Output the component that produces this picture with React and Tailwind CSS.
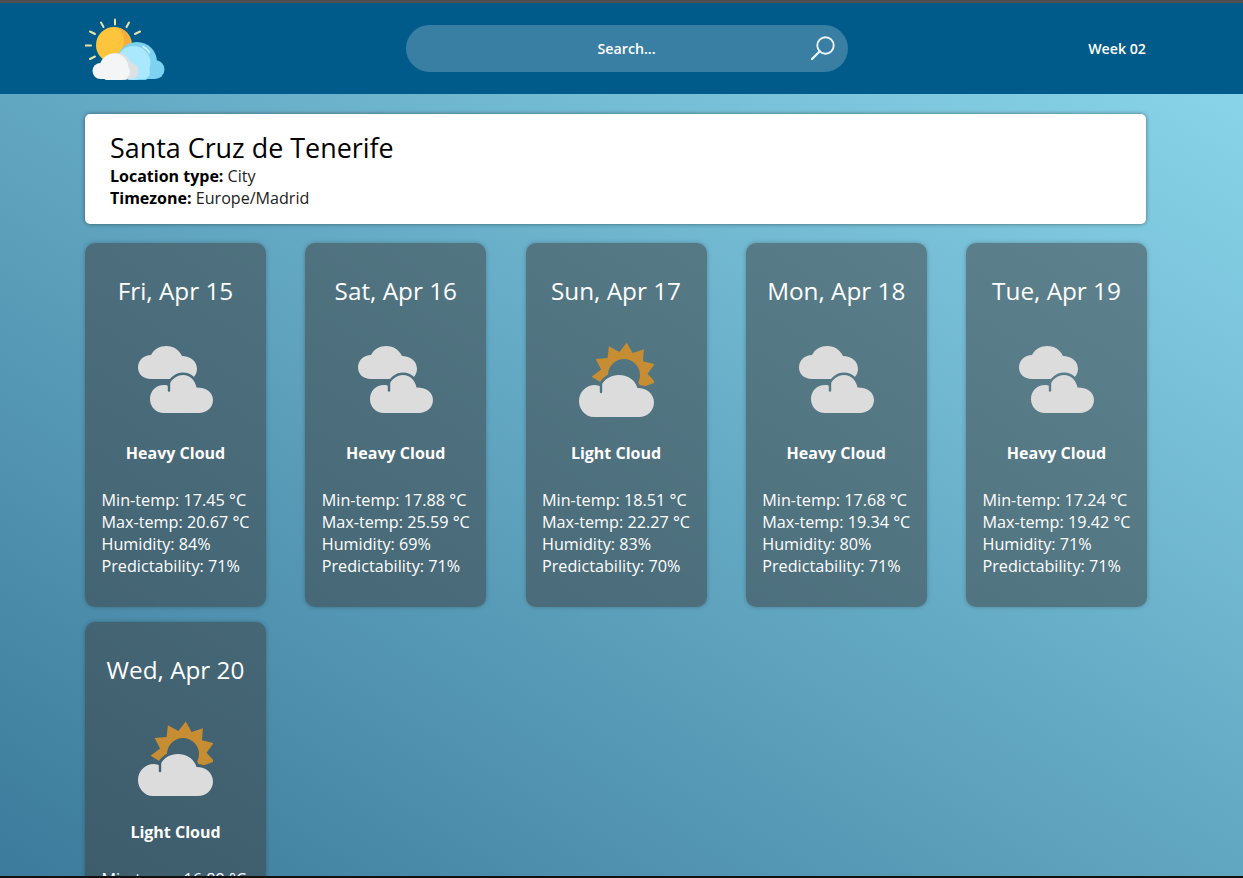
import React from "react";

const days = [
  { date: "Fri, Apr 15", kind: "Heavy Cloud", min: "17.45", max: "20.67", hum: 84, pred: 71 },
  { date: "Sat, Apr 16", kind: "Heavy Cloud", min: "17.88", max: "25.59", hum: 69, pred: 71 },
  { date: "Sun, Apr 17", kind: "Light Cloud", min: "18.51", max: "22.27", hum: 83, pred: 70 },
  { date: "Mon, Apr 18", kind: "Heavy Cloud", min: "17.68", max: "19.34", hum: 80, pred: 71 },
  { date: "Tue, Apr 19", kind: "Heavy Cloud", min: "17.24", max: "19.42", hum: 71, pred: 71 },
  { date: "Wed, Apr 20", kind: "Light Cloud", min: "16.89", max: "21.02", hum: 78, pred: 70 },
];

const lowerCloud = "M26 71C18 71 12 65 12 57C12 49 18 43 26 43C28 43 29.5 43.5 31 44C33 37 39 33 45 33C52 33 57 38 58.5 45.5C68 45.5 75 50 75 58C75 66 68 71 61 71Z";
const upperCloud = "M13 37C5 37 0 32 0 25.5C0 18 6 13 13 13C16 7 22 4 28 4C36 4 41 8 44 14C52 14 59 19 59 27C59 31 57 34 54 37Z";
const bigCloud = "M15 75C6 75 0 67 0 59C0 50 7 43 16 43C18 43 20 43.5 22 44.5C25 37 32 33 40 33C49 33 56 38 58.5 46C68 46 75 52 75 60.5C75 69 68 75 60 75Z";

function HeavyCloud() {
  return (
    <svg width="75" height="75" viewBox="0 0 75 75" className="block">
      <mask id="hc-upper" maskUnits="userSpaceOnUse" x="0" y="0" width="75" height="75">
        <rect width="75" height="75" fill="#fff" />
        <path d={lowerCloud} fill="#000" stroke="#000" strokeWidth="5" />
      </mask>
      <mask id="hc-lower" maskUnits="userSpaceOnUse" x="0" y="0" width="75" height="75">
        <rect width="75" height="75" fill="#fff" />
        <path d="M31 41V48.5" stroke="#000" strokeWidth="2.4" strokeLinecap="round" />
      </mask>
      <path d={upperCloud} fill="#dcdcdc" mask="url(#hc-upper)" />
      <path d={lowerCloud} fill="#dcdcdc" mask="url(#hc-lower)" />
    </svg>
  );
}

function sunPath() {
  const cx = 45, cy = 33;
  const spikes = [];
  for (let i = 0; i < 22; i++) {
    const a = ((-85 + i * (360 / 22)) * Math.PI) / 180;
    const r = i % 2 === 0 ? 32.5 : 23.5;
    spikes.push(`${(cx + r * Math.cos(a)).toFixed(1)} ${(cy + r * Math.sin(a)).toFixed(1)}`);
  }
  return `M${spikes.join("L")}ZM${cx - 16} ${cy}a16 16 0 1 0 32 0a16 16 0 1 0-32 0Z`;
}

function LightCloud() {
  return (
    <svg width="75" height="75" viewBox="0 0 75 75" className="block">
      <mask id="lc-sun" maskUnits="userSpaceOnUse" x="0" y="0" width="75" height="75">
        <rect width="75" height="75" fill="#fff" />
        <path d={bigCloud} fill="#000" stroke="#000" strokeWidth="6" />
      </mask>
      <mask id="lc-cloud" maskUnits="userSpaceOnUse" x="0" y="0" width="75" height="75">
        <rect width="75" height="75" fill="#fff" />
        <path d="M22 42V50" stroke="#000" strokeWidth="2.4" strokeLinecap="round" />
      </mask>
      <path d={sunPath()} fill="#c78d33" fillRule="evenodd" mask="url(#lc-sun)" />
      <path d={bigCloud} fill="#dcdcdc" mask="url(#lc-cloud)" />
    </svg>
  );
}

function Logo() {
  const rays = [
    [30, 1.5, 30, 6.5], [16, 4.5, 18.5, 9], [44, 4.5, 41.5, 9], [5, 13.5, 10, 16],
    [55, 13.5, 50, 16], [0.5, 27.5, 6, 27.5], [5, 41, 10, 38.5],
  ];
  return (
    <svg width="80" height="62" viewBox="0 0 80 62" className="block" style={{ marginTop: 1 }}>
      {rays.map((r, i) => (
        <line key={i} x1={r[0]} y1={r[1]} x2={r[2]} y2={r[3]} stroke="#e8e3a6" strokeWidth="2" strokeLinecap="round" />
      ))}
      <circle cx="29" cy="27" r="18" fill="#fcc53c" />
      <path d="M33 9.500a18 18 0 0 1 13 17.500c0 4-1 7-3 10l-14 2c6-3 10-9 10-16 0-5-2-10-6-13.500Z" fill="#f8ad3a" />
      <g fill="#7dd2f2">
        <circle cx="52" cy="44" r="20" />
        <circle cx="70" cy="51.500" r="9.500" />
        <rect x="40" y="50" width="30" height="11" />
      </g>
      <g fill="#a9e8fe">
        <circle cx="48.500" cy="45" r="17" />
        <rect x="40" y="50" width="23" height="11" rx="4" />
        <circle cx="58" cy="54" r="7" />
      </g>
      <path d="M58 28.500c3 1.500 5 3.500 6.500 6" fill="none" stroke="#d9f6ff" strokeWidth="1.500" strokeLinecap="round" />
      <g fill="#dde1e4">
        <circle cx="32" cy="50" r="15" />
        <circle cx="45.500" cy="53" r="8" />
        <rect x="15" y="50" width="30" height="11" />
      </g>
      <g fill="#f3f5f7">
        <circle cx="29" cy="50" r="14.500" />
        <circle cx="15.500" cy="53" r="8" />
        <rect x="15" y="50" width="27" height="11" />
        <circle cx="38" cy="54" r="7" />
      </g>
    </svg>
  );
}

function SearchIcon() {
  return (
    <svg width="26" height="26" viewBox="0 0 26 26" fill="none" stroke="#eef6fa" strokeWidth="1.900" strokeLinecap="round" className="block">
      <circle cx="15.500" cy="10.500" r="8.200" />
      <path d="M9.800 16.200 2 24" strokeWidth="2.200" />
    </svg>
  );
}

function DayCard({ d }) {
  return (
    <div className="w-[181px] h-[364px] rounded-[10px] bg-[#3c3c3c]/50 shadow-[0_0_4px_rgba(0,0,0,0.25)] pt-[31px] px-[16.5px] text-white">
      <h2 className="text-center text-[24.3px] leading-[33px] font-normal whitespace-nowrap">{d.date}</h2>
      <div className="flex justify-center mt-[35px]">
        {d.kind === "Heavy Cloud" ? <HeavyCloud /> : <LightCloud />}
      </div>
      <p className="text-center text-[16px] leading-[22px] font-bold mt-[25px]">{d.kind}</p>
      <ul className="mt-[25px] text-[16.2px] leading-[22px] whitespace-nowrap">
        <li>Min-temp: {d.min} °C</li>
        <li>Max-temp: {d.max} °C</li>
        <li>Humidity: {d.hum}%</li>
        <li>Predictability: {d.pred}%</li>
      </ul>
    </div>
  );
}

export default function App() {
  return (
    <div className="h-[878px] w-[1243px] overflow-hidden flex flex-col bg-[#111] font-['Open_Sans',sans-serif]">
      <div className="h-[3px] shrink-0 bg-[#505050]" />
      <header className="h-[91px] shrink-0 bg-[#005b8a] text-white">
        <div className="ml-[85px] w-[1061px] h-full flex items-center justify-between">
          <Logo />
          <div className="relative w-[442px] h-[47px] rounded-full bg-white/[0.22] flex items-center justify-center text-[14.2px] font-semibold">
            Search...
            <span className="absolute right-[12px] top-[10px]"><SearchIcon /></span>
          </div>
          <span className="text-[14.2px] font-semibold">Week 02</span>
        </div>
      </header>
      <main className="h-[782px] shrink-0 overflow-hidden bg-linear-to-tr from-[#3c7b9b] to-[#89d4e9]">
        <div className="ml-[85px] w-[1062px] pt-[20px]">
          <section className="w-[1061px] h-[110px] rounded-[5px] bg-white shadow-[0_0_4px_rgba(0,0,0,0.45)] pl-[25px] pt-[16px] text-[#222]">
            <h1 className="text-[26.9px] leading-[35px] font-normal text-black">Santa Cruz de Tenerife</h1>
            <p className="text-[16.1px] leading-[22px]"><strong className="text-[16px] font-bold text-black">Location type:</strong> City</p>
            <p className="text-[16.1px] leading-[22px]"><strong className="text-[16px] font-bold text-black">Timezone:</strong> Europe/Madrid</p>
          </section>
          <div className="mt-[19px] grid grid-cols-[repeat(5,181px)] justify-between gap-y-[15px]">
            {days.map((d) => <DayCard key={d.date} d={d} />)}
          </div>
        </div>
      </main>
    </div>
  );
}
